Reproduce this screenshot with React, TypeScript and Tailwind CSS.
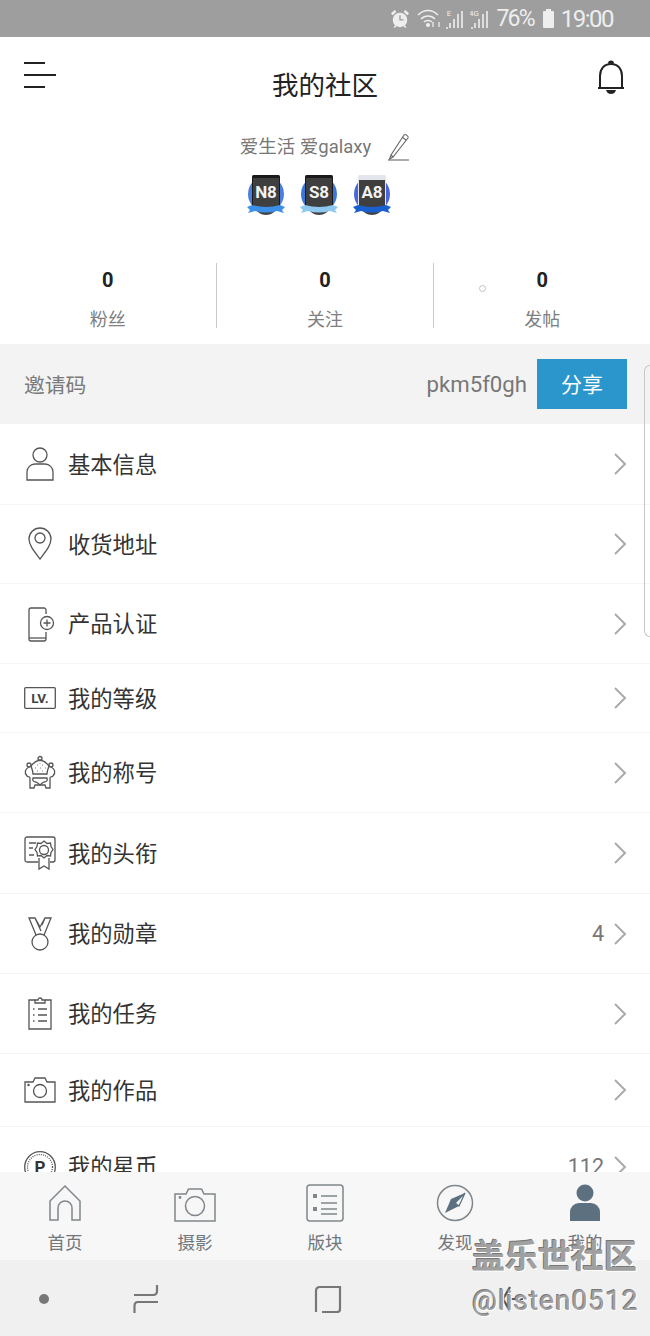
import type { ReactNode } from "react";

const lineIcon = "fill-none stroke-[#555]";

function Chevron() {
  return (
    <svg width="14" height="24" viewBox="0 0 14 24" className="fill-none stroke-[#aaa] stroke-2">
      <path d="M2 2l10 10L2 22" />
    </svg>
  );
}

function Icon({ children }: { children: ReactNode }) {
  return (
    <svg width="32" height="36" viewBox="0 0 32 36" className={lineIcon} strokeWidth="1.3">
      {children}
    </svg>
  );
}

const rows: { label: string; h: string; count?: string; icon: ReactNode }[] = [
  {
    label: "基本信息",
    h: "h-[81px]",
    icon: (
      <Icon>
        <circle cx="16" cy="9" r="7" />
        <path d="M3 34v-8a8 8 0 0 1 8-8h10a8 8 0 0 1 8 8v8z" />
      </Icon>
    ),
  },
  {
    label: "收货地址",
    h: "h-[79px]",
    icon: (
      <Icon>
        <path d="M16 33C10 25 5 19 5 13a11 11 0 0 1 22 0c0 6-5 12-11 20z" />
        <circle cx="16" cy="12" r="5" />
      </Icon>
    ),
  },
  {
    label: "产品认证",
    h: "h-[80px]",
    icon: (
      <Icon>
        <path d="M22 8V4a2 2 0 0 0-2-2H7a2 2 0 0 0-2 2v29a2 2 0 0 0 2 2h13a2 2 0 0 0 2-2v-7" />
        <path d="M5 32h17" />
        <circle cx="23" cy="17" r="6.5" />
        <path d="M23 13.5v7M19.5 17h7" />
      </Icon>
    ),
  },
  {
    label: "我的等级",
    h: "h-[69px]",
    icon: (
      <svg width="32" height="22" viewBox="0 0 32 22" className={lineIcon} strokeWidth="1.3">
        <rect x="0.7" y="0.7" width="30.6" height="20.6" rx="1" />
        <text x="16" y="16" textAnchor="middle" className="fill-[#444] stroke-none font-['Roboto',sans-serif] text-[13.500px] font-bold">
          LV.
        </text>
      </svg>
    ),
  },
  {
    label: "我的称号",
    h: "h-[80px]",
    icon: (
      <Icon>
        <circle cx="16" cy="3.5" r="2" />
        <circle cx="5" cy="10" r="2" />
        <circle cx="27" cy="10" r="2" />
        <path d="M7 11c2-3 5-5 9-6 4 1 7 3 9 6-1 3-2 5-2 8H9c0-3-1-5-2-8z" />
        <path d="M5 12c-4 2-5 6-2 9 1 1 3 0 3 2v10h4l1-3h10l1 3h4V23c0-2 2-1 3-2 3-3 2-7-2-9" />
        <path d="M9 23h14c1 3-1 4-3 4-2 1-3 2-4 3-1-1-2-2-4-3-2 0-4-1-3-4z" />
        <path d="M13 10h.5M18.500 10h.5M16 8v.5M11 13h.5M16 13h.5M21 13h.5M13.500 16h.5M18.500 16h.5" strokeDasharray="1 1" />
      </Icon>
    ),
  },
  {
    label: "我的头衔",
    h: "h-[81px]",
    icon: (
      <Icon>
        <path d="M14 27H3a2 2 0 0 1-2-2V4a2 2 0 0 1 2-2h26a2 2 0 0 1 2 2v21a2 2 0 0 1-2 2h-3" />
        <path d="M5 8h7M5 13h4M5 20h5" />
        <path d="M20 6l3 2.500 3.500-.5.500 3.500 2 3-2 3-.500 3.500-3.500-.5-3 2.500-3-2.500-3.500.5-.5-3.500-2-3 2-3 .5-3.500 3.500.5z" />
        <circle cx="20" cy="15" r="4.500" />
        <path d="M15 23v11l5-3 5 3V23" />
      </Icon>
    ),
  },
  {
    label: "我的勋章",
    h: "h-[80px]",
    icon: (
      <Icon>
        <circle cx="16" cy="26" r="8" />
        <path d="M12 19L5 2h6l5 9 5-9h6l-7 17M11 2l6 13M21 2l-3 7" />
      </Icon>
    ),
    count: "4",
  },
  {
    label: "我的任务",
    h: "h-[80px]",
    icon: (
      <Icon>
        <path d="M11 4H5v29h22V4h-6" />
        <path d="M11 6V4h3a2 2 0 0 1 4 0h3v3H11z" />
        <path d="M14 13h9M14 19h9M14 25h9M9 13h1.500M9 19h1.500M9 25h1.500" strokeWidth="1.700" />
      </Icon>
    ),
  },
  {
    label: "我的作品",
    h: "h-[73px]",
    icon: (
      <svg width="32" height="26" viewBox="0 0 32 26" className={lineIcon} strokeWidth="1.3">
        <path d="M1 25V5h8l2-4h10l2 4h8v20z" />
        <circle cx="16" cy="14" r="6.500" />
        <circle cx="4.500" cy="8" r="0.600" />
      </svg>
    ),
  },
  {
    label: "我的星币",
    h: "h-[80px]",
    count: "112",
    icon: (
      <svg width="32" height="36" viewBox="0 0 32 36" className={lineIcon} strokeWidth="1.3">
        <circle cx="16" cy="18" r="15.300" />
        <circle cx="16" cy="18" r="12.500" strokeDasharray="1 1.200" />
        <text x="16" y="24" textAnchor="middle" className="fill-[#333] stroke-none font-['Roboto',sans-serif] text-[17px] font-bold">
          P
        </text>
      </svg>
    ),
  },
];

function Badge({ name, ring, ribbon, light }: { name: string; ring: string; ribbon: string; light?: boolean }) {
  return (
    <svg width="40" height="42" viewBox="0 0 40 42">
      <circle cx="20" cy="20" r="18" fill={ring} />
      <path d="M8 32h24c-2 6-7 9-12 9s-10-3-12-9z" fill="#444" />
      <rect x="6" y="1" width="28" height="32" rx="1.500" fill={light ? "#e4e6ee" : "#1a1a1a"} />
      <rect x="7" y={light ? 6 : 4} width="26" height={light ? 27 : 29} fill="#3f3f3f" />
      <text x="20" y="24" textAnchor="middle" fill="#f2f2f2" className="font-['Roboto',sans-serif] text-[17px] font-bold">
        {name}
      </text>
      <path d="M1 33l5-2q14 4 28 0l5 2-3 3 2 3-7-2q-11 3-22 0l-7 2 2-3z" fill={ribbon} />
    </svg>
  );
}

function Stat({ value, label }: { value: string; label: string }) {
  return (
    <div className="flex flex-1 flex-col items-center">
      <span className="flex h-[34px] items-center text-[20px] leading-none font-bold text-[#222]">{value}</span>
      <span className="mt-[13px] flex h-[18px] items-center pt-[1px] text-[18px] leading-none text-[#808080]">{label}</span>
    </div>
  );
}

const tabIcon = "fill-none stroke-[#80868b]";

const tabs: { label: string; icon: ReactNode }[] = [
  {
    label: "首页",
    icon: (
      <svg width="34" height="38" viewBox="0 0 34 38" className={tabIcon} strokeWidth="1.500">
        <path d="M2 36V17L17 2l15 15v19H24V24a7 7 0 0 0-14 0v12z" />
      </svg>
    ),
  },
  {
    label: "摄影",
    icon: (
      <svg width="42" height="34" viewBox="0 0 42 34" className={tabIcon} strokeWidth="1.500">
        <path d="M1 33V6h11l2-4a1 1 0 0 1 1-1h12a1 1 0 0 1 1 1l2 4h11v27z" />
        <circle cx="21" cy="18" r="9.500" />
        <circle cx="6" cy="9.500" r="0.700" />
      </svg>
    ),
  },
  {
    label: "版块",
    icon: (
      <svg width="38" height="38" viewBox="0 0 38 38" className={tabIcon} strokeWidth="1.500">
        <rect x="1" y="1" width="36" height="36" rx="3" />
        <rect x="7" y="10" width="4" height="4" className="fill-[#80868b] stroke-none" />
        <rect x="7" y="23" width="4" height="4" className="fill-[#80868b] stroke-none" />
        <path d="M15 12h16M15 19h16M15 25h16M15 30h16" />
      </svg>
    ),
  },
  {
    label: "发现",
    icon: (
      <svg width="38" height="38" viewBox="0 0 38 38" className={tabIcon} strokeWidth="1.500">
        <circle cx="19" cy="19" r="17.500" />
        <path d="M9 29l6-14 14-6-6 13z" className="fill-[#5d7080] stroke-none" />
        <path d="M29 9L19 19l4 3z" className="fill-[#f7f7f7] stroke-[#5d7080]" strokeWidth="1.200" />
      </svg>
    ),
  },
  {
    label: "我的",
    icon: (
      <svg width="32" height="38" viewBox="0 0 32 38" className="fill-[#5d7080]">
        <circle cx="16" cy="9" r="8.500" />
        <path d="M1 37V28a9 9 0 0 1 9-9h12a9 9 0 0 1 9 9v9z" />
      </svg>
    ),
  },
];

function Signal({ tag }: { tag: string }) {
  return (
    <svg width="19" height="22" viewBox="0 0 19 22" className="fill-none stroke-[#eee]" strokeWidth="1.600">
      <text x="4" y="8" textAnchor="middle" fill="#eee" stroke="none" className="font-['Roboto',sans-serif] text-[8px]">
        {tag}
      </text>
      <path d="M1 20h2M5 20v-5M9 20V11M13 20V6M17 20V3" />
    </svg>
  );
}

export default function App() {
  return (
    <div className="relative flex h-[1336px] w-[650px] flex-col overflow-hidden bg-white font-['Roboto','Noto_Sans_CJK_SC',sans-serif]">
      {/* status bar */}
      <div className="flex h-[37px] shrink-0 items-center justify-end bg-[#9e9e9e] pr-[37px] text-[#eeeeee]">
        <svg width="20" height="22" viewBox="0 0 22 22" className="fill-[#eee]">
          <circle cx="11" cy="12" r="8" />
          <path d="M1 5l4-4 2 2-4 4zM21 5l-4-4-2 2 4 4zM4 20l2-3 1.500 1-2 3zM18 20l-2-3-1.500 1 2 3z" />
          <path d="M11 7v5h4" fill="none" stroke="#9e9e9e" strokeWidth="1.500" />
        </svg>
        <svg width="24" height="20" viewBox="0 0 24 20" className="ml-[7px] fill-none stroke-[#eee]" strokeWidth="1.500">
          <path d="M1 6c6-6 14-6 20 0M4 10c4-4 10-4 14 0M7 13c2-2 6-2 8 0" />
          <circle cx="11" cy="16" r="1.300" fill="#eee" />
          <path d="M16 13v5M22 13v5" strokeWidth="1.300" />
        </svg>
        <div className="ml-[4px]">
          <Signal tag="E" />
        </div>
        <div className="ml-[6px]">
          <Signal tag="4G" />
        </div>
        <span className="ml-[7px] text-[23px] leading-none tracking-[-1.800px]">76%</span>
        <svg width="13" height="19" viewBox="0 0 13 19" className="ml-[8px] fill-[#eee]">
          <rect x="4" y="0" width="5" height="2" />
          <rect x="1" y="2" width="11" height="17" rx="1" />
        </svg>
        <span className="ml-[6px] text-[24px] leading-none tracking-[-1.500px]">19:00</span>
      </div>

      {/* header */}
      <div className="grid h-[96px] shrink-0 grid-cols-[1fr_auto_1fr] items-start px-6">
        <div className="mt-[25px] flex flex-col gap-[10px]">
          <div className="h-[2px] w-[21px] bg-[#222]" />
          <div className="h-[2px] w-[32px] bg-[#222]" />
          <div className="h-[2px] w-[21px] bg-[#222]" />
        </div>
        <h1 className="mt-[32px] text-[26.500px] leading-[34px] font-normal text-[#222]">我的社区</h1>
        <div className="mt-[23px] flex justify-end">
          <svg width="30" height="35" viewBox="0 0 30 35" className="fill-none stroke-[#222]" strokeWidth="2">
            <path d="M2 28h26M4 28V16C4 9 8 4 15 4s11 5 11 12v12" />
            <path d="M13 3.500a2 2 0 0 1 4 0" fill="#222" />
            <path d="M10 30h10c-1 3-3 4-5 4s-4-1-5-4z" fill="#222" stroke="none" />
          </svg>
        </div>
      </div>

      {/* profile */}
      <div className="flex h-[27px] shrink-0 items-center justify-center text-[18.500px] leading-none text-[#777]">
        <span className="pt-[2px]">爱生活 爱galaxy</span>
        <svg width="22" height="28" viewBox="0 0 22 28" className="ml-[17px] fill-none stroke-[#666]" strokeWidth="1.100">
          <path d="M3 22L1.500 26 5 24 20 5c1-1.500-2.500-4.500-4-3zM14 4l4 3M3 22l2 2" />
          <path d="M0 27h21" />
        </svg>
      </div>
      <div className="mt-[14px] flex h-[42px] shrink-0 items-center justify-center gap-[13px] pr-[12px]">
        <Badge name="N8" ring="#4a7fe0" ribbon="#3c8fe8" />
        <Badge name="S8" ring="#3c78d8" ribbon="#8cc8f0" />
        <Badge name="A8" ring="#4a66d8" ribbon="#1a5fd0" light />
      </div>

      {/* stats */}
      <div className="relative mt-[47px] flex h-[65px] shrink-0">
        <Stat value="0" label="粉丝" />
        <div className="w-[1.500px] bg-[#c9c9c9]" />
        <Stat value="0" label="关注" />
        <div className="w-[1.500px] bg-[#c9c9c9]" />
        <Stat value="0" label="发帖" />
        <div className="absolute top-[22px] left-[479px] h-[7px] w-[7px] rounded-full border border-[#bcc4c4]" />
      </div>

      {/* invite code */}
      <div className="mt-[16px] flex h-[80px] shrink-0 items-center justify-between bg-[#f3f3f3] pr-[23px] pl-6">
        <span className="pt-[5px] text-[20.800px] text-[#7a7a7a]">邀请码</span>
        <div className="flex items-center gap-[10px]">
          <span className="pt-[2px] text-[22.200px] text-[#777]">pkm5f0gh</span>
          <button className="flex h-[50px] w-[90px] items-center justify-center bg-[#2a96cc] pt-[3px] text-[21px] text-white">分享</button>
        </div>
      </div>

      {/* menu list */}
      <div className="min-h-0 flex-1 overflow-hidden">
        {rows.map((r) => (
          <div key={r.label} className={`flex shrink-0 items-center border-b border-[#f4f4f4] pr-[23px] pl-6 ${r.h}`}>
            <div className="flex w-[32px] shrink-0 justify-center">{r.icon}</div>
            <span className="ml-3 flex-1 pt-[3px] text-[22.300px] text-[#333]">{r.label}</span>
            {r.count && <span className="mr-[9px] pt-[2px] text-[21.500px] text-[#777]">{r.count}</span>}
            <Chevron />
          </div>
        ))}
      </div>

      {/* tab bar */}
      <div className="flex h-[88px] shrink-0 bg-[#f7f7f7]">
        {tabs.map((t) => (
          <div key={t.label} className="flex flex-1 flex-col items-center">
            <div className="mt-[12px] flex h-[38px] items-end">{t.icon}</div>
            <span className="mt-[9px] text-[17.500px] leading-[24px] text-[#6f767c]">{t.label}</span>
          </div>
        ))}
      </div>

      {/* system nav */}
      <div className="flex h-[76px] shrink-0 items-center bg-[#f0f0f0] pt-[2px]">
        <div className="ml-[39px] h-[10px] w-[10px] rounded-full bg-[#777]" />
        <svg width="26" height="30" viewBox="0 0 26 30" className="ml-[84px] fill-none stroke-[#777]" strokeWidth="2.200">
          <path d="M1 11h19c3 0 4-2 4-4V1M25 18H5c-3 0-3.500 2-3.500 4v7" />
        </svg>
        <svg width="28" height="28" viewBox="0 0 28 28" className="ml-[155px] fill-none stroke-[#777]" strokeWidth="2.200">
          <path d="M2 27V6c0-3 2-4 4-4h20v22c0 2-1 3-3 3H8" />
        </svg>
        <svg width="22" height="28" viewBox="0 0 22 28" className="ml-[160px] fill-none stroke-[#555]" strokeWidth="2.200">
          <path d="M8 2L1 14l7 12M9 14h12" />
        </svg>
      </div>

      {/* watermark */}
      <div className="absolute top-[1237px] left-[472px] flex flex-col text-[#a0a0a0] [text-shadow:1px_1px_0_#fff,-1px_-1px_0_#777]">
        <span className="text-[33px] leading-[40px] font-bold">盖乐世社区</span>
        <span className="mt-[4px] text-[28px] leading-[40px] tracking-[1px]">@listen0512</span>
      </div>

      {/* edge panel handle */}
      <div className="absolute top-[365px] right-0 h-[272px] w-[6px] rounded-l-[6px] border-y border-l border-[#c8c8c8]" />
    </div>
  );
}
